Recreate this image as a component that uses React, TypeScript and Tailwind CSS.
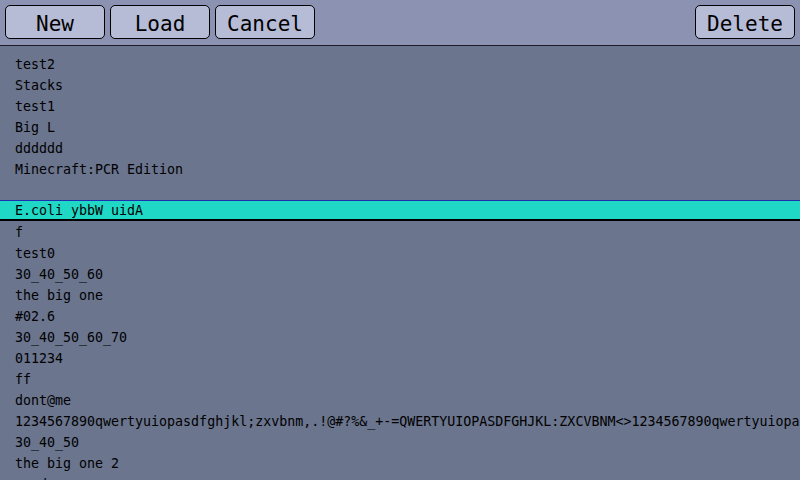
import React from "react";

const items = [
  "test2",
  "Stacks",
  "test1",
  "Big L",
  "dddddd",
  "Minecraft:PCR Edition",
  "",
  "E.coli ybbW uidA",
  "f",
  "test0",
  "30_40_50_60",
  "the big one",
  "#02.6",
  "30_40_50_60_70",
  "011234",
  "ff",
  "dont@me",
  "1234567890qwertyuiopasdfghjkl;zxvbnm,.!@#?%&_+-=QWERTYUIOPASDFGHJKL:ZXCVBNM<>1234567890qwertyuiopasdfghjkl",
  "30_40_50",
  "the big one 2",
  "sasd",
];

const mono = { fontFamily: '"DejaVu Sans Mono", monospace' };

function Btn({ label }: { label: string }) {
  return (
    <button
      className="w-[100px] h-[34px] rounded-[5px] border border-black bg-[#b6bbd6] text-[21px] text-black leading-none flex items-center justify-center pt-[4px]"
      style={mono}
    >
      {label}
    </button>
  );
}

export default function App() {
  return (
    <div className="w-[800px] h-[480px] overflow-hidden bg-[#6b758e] flex flex-col" style={mono}>
      <div className="h-[46px] shrink-0 bg-[#8c92b2] border-b border-[#1a1a2a] flex items-start pt-[5px] px-[5px]">
        <div className="flex gap-[5px]">
          <Btn label="New" />
          <Btn label="Load" />
          <Btn label="Cancel" />
        </div>
        <div className="ml-auto">
          <Btn label="Delete" />
        </div>
      </div>
      <div className="flex flex-col pt-[7px]">
        {items.map((t, i) =>
          i === 7 ? (
            <div
              key={i}
              className="h-[21px] shrink-0 bg-[#20d8c6] border-t border-t-[#2030b0] border-b-2 border-b-black pl-[15px] text-[13.3px] text-black leading-[19px] whitespace-nowrap"
            >
              {t}
            </div>
          ) : (
            <div
              key={i}
              className="h-[21px] shrink-0 pl-[15px] text-[13.3px] text-black leading-[23px] whitespace-nowrap"
            >
              {t}
            </div>
          )
        )}
      </div>
    </div>
  );
}
